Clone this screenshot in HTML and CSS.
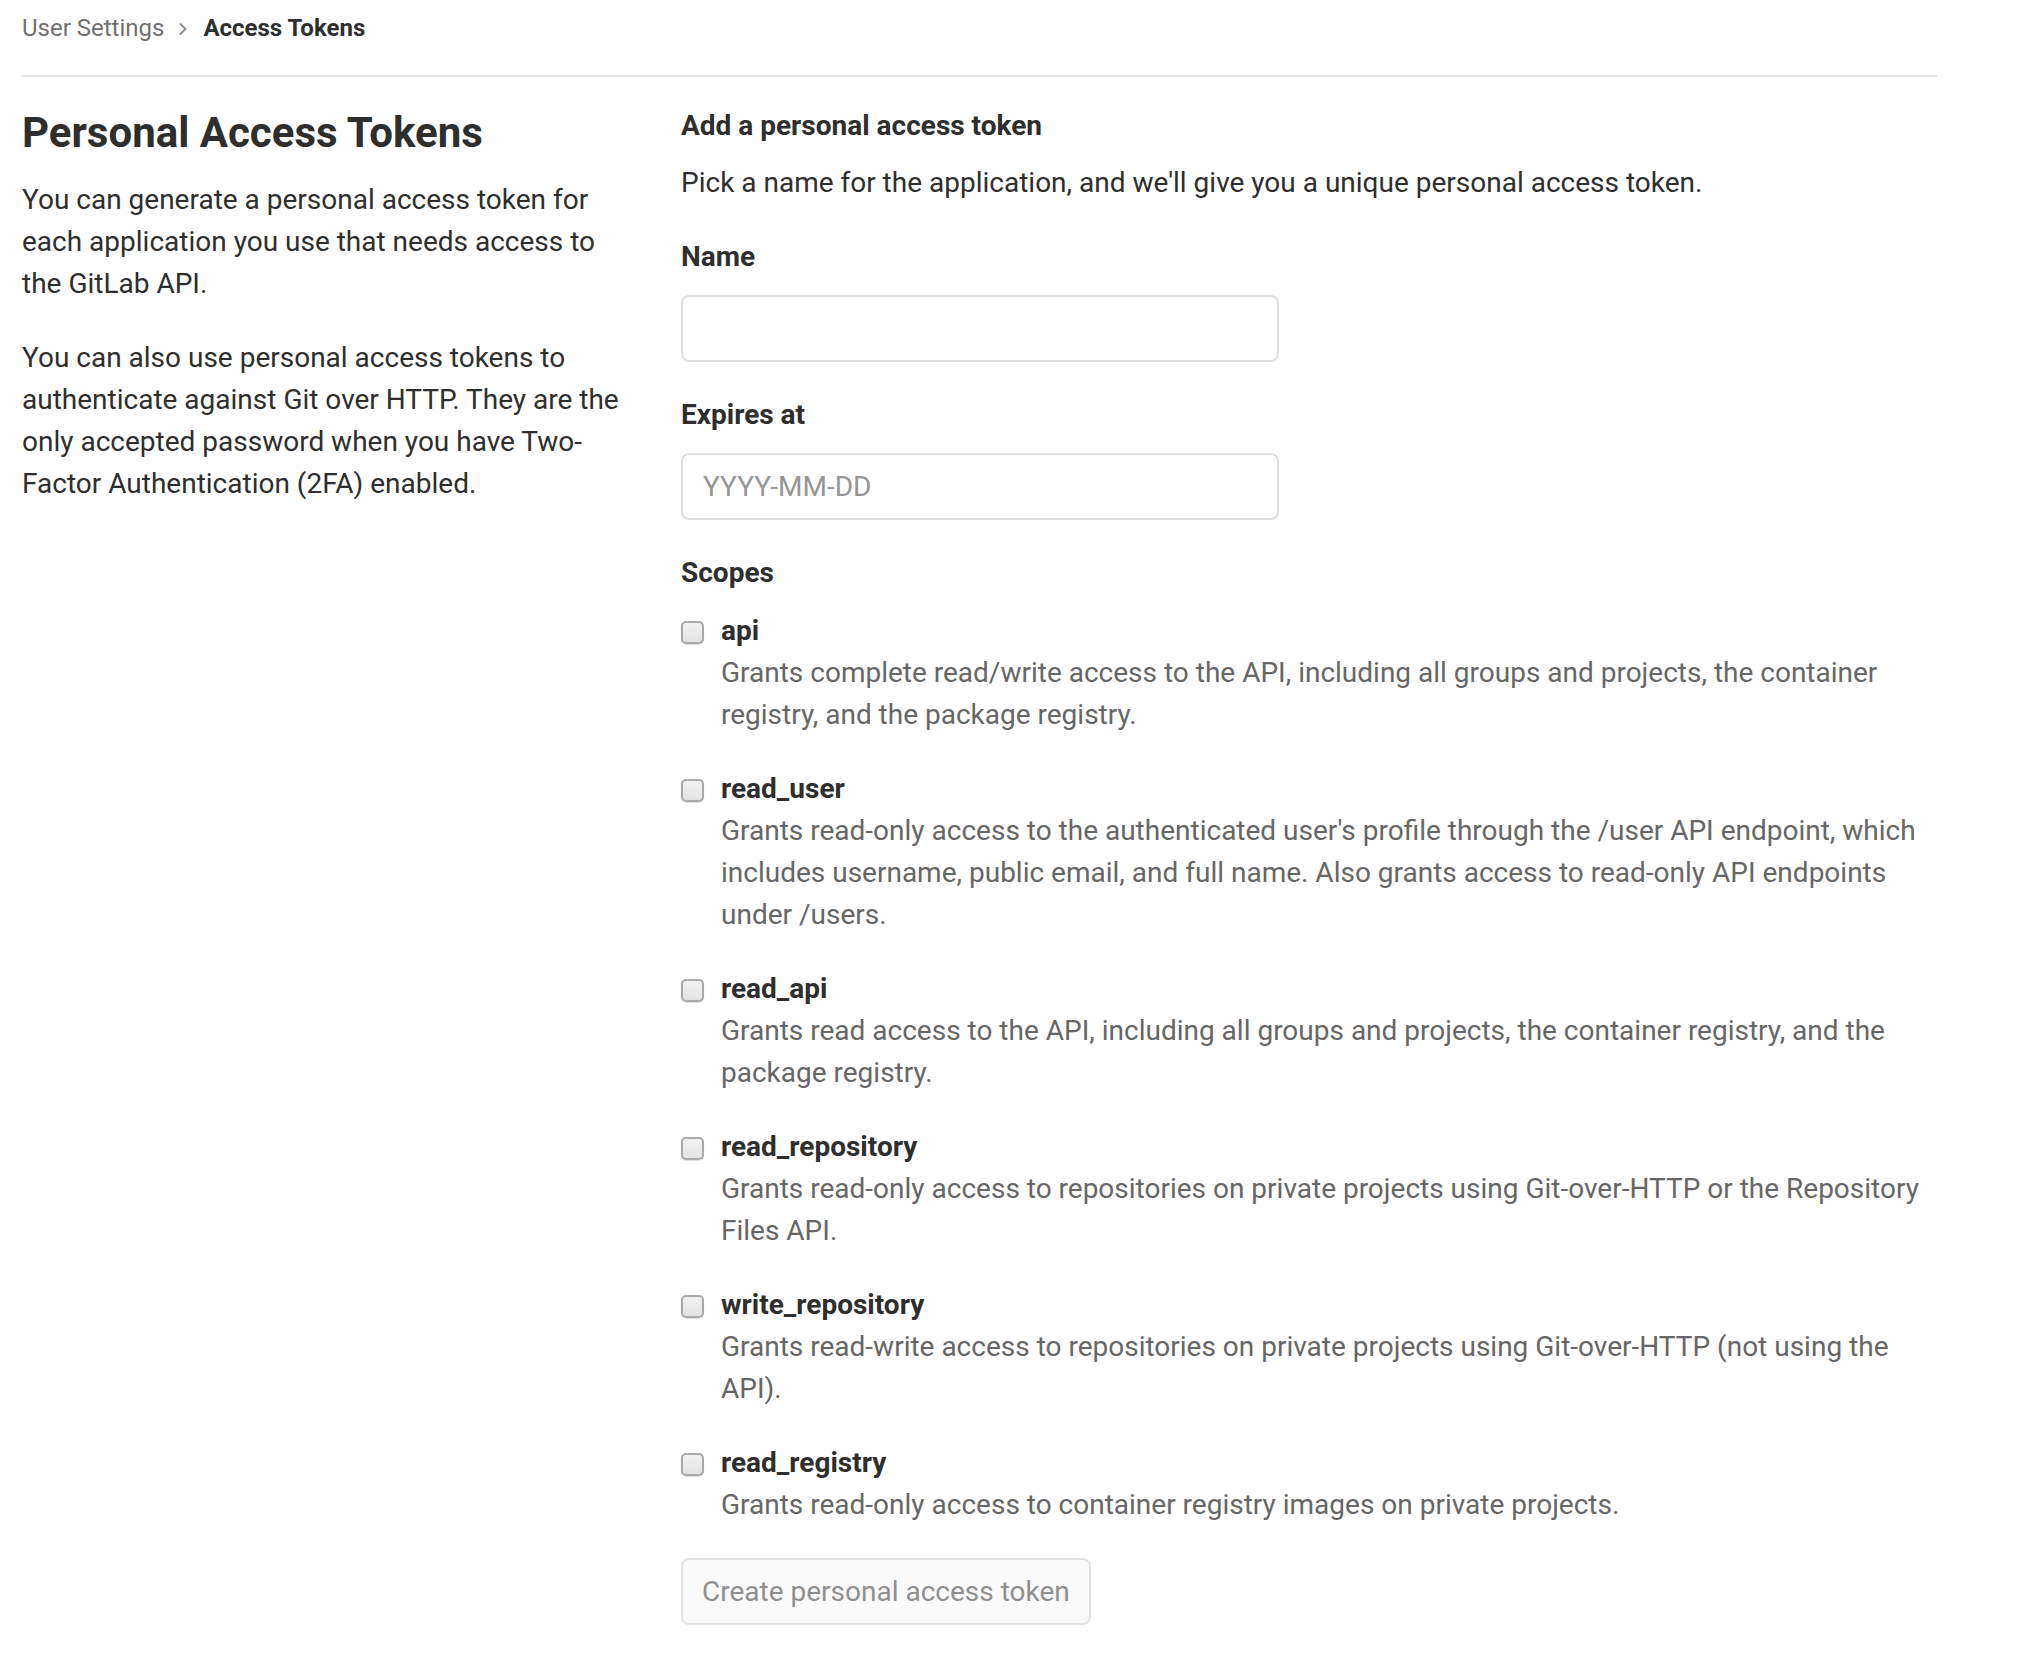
FILE: index.html
```html
<!DOCTYPE html>
<html lang="en">
<head>
<meta charset="utf-8">
<title>Access Tokens</title>
<link rel="stylesheet" href="styles.css">
</head>
<body>
<div class="page">
  <nav class="breadcrumb">
    <span class="crumb">User Settings</span>
    <svg class="chev" width="8" height="14" viewBox="0 0 8 14"><path d="M1.5 2 L6.5 7 L1.5 12" fill="none" stroke="#8c8c8c" stroke-width="1.8" stroke-linecap="round" stroke-linejoin="round"/></svg>
    <span class="crumb current">Access Tokens</span>
  </nav>
  <main class="row">
    <section class="sidebar">
      <h4 class="side-title">Personal Access Tokens</h4>
      <p class="side-text">You can generate a personal access token for each application you use that needs access to the GitLab API.</p>
      <p class="side-text">You can also use personal access tokens to authenticate against Git over HTTP. They are the only accepted password when you have Two-Factor Authentication (2FA) enabled.</p>
    </section>
    <section class="content">
      <h5 class="form-title">Add a personal access token</h5>
      <p class="form-intro">Pick a name for the application, and we'll give you a unique personal access token.</p>
      <div class="form-group">
        <label class="label" for="name">Name</label>
        <input class="input" id="name" type="text">
      </div>
      <div class="form-group">
        <label class="label" for="exp">Expires at</label>
        <input class="input" id="exp" type="text" placeholder="YYYY-MM-DD">
      </div>
      <div class="form-group scopes">
        <div class="label">Scopes</div>
        <div class="scope">
          <input class="check" type="checkbox" id="s1">
          <div class="scope-body"><label class="scope-name" for="s1">api</label>
            <p class="scope-desc">Grants complete read/write access to the API, including all groups and projects, the container registry, and the package registry.</p></div>
        </div>
        <div class="scope">
          <input class="check" type="checkbox" id="s2">
          <div class="scope-body"><label class="scope-name" for="s2">read_user</label>
            <p class="scope-desc">Grants read-only access to the authenticated user's profile through the /user API endpoint, which includes username, public email, and full name. Also grants access to read-only API endpoints under /users.</p></div>
        </div>
        <div class="scope">
          <input class="check" type="checkbox" id="s3">
          <div class="scope-body"><label class="scope-name" for="s3">read_api</label>
            <p class="scope-desc">Grants read access to the API, including all groups and projects, the container registry, and the package registry.</p></div>
        </div>
        <div class="scope">
          <input class="check" type="checkbox" id="s4">
          <div class="scope-body"><label class="scope-name" for="s4">read_repository</label>
            <p class="scope-desc">Grants read-only access to repositories on private projects using Git-over-HTTP or the Repository Files API.</p></div>
        </div>
        <div class="scope">
          <input class="check" type="checkbox" id="s5">
          <div class="scope-body"><label class="scope-name" for="s5">write_repository</label>
            <p class="scope-desc">Grants read-write access to repositories on private projects using Git-over-HTTP (not using the API).</p></div>
        </div>
        <div class="scope">
          <input class="check" type="checkbox" id="s6">
          <div class="scope-body"><label class="scope-name" for="s6">read_registry</label>
            <p class="scope-desc">Grants read-only access to container registry images on private projects.</p></div>
        </div>
      </div>
      <button class="btn" type="button" disabled>Create personal access token</button>
    </section>
  </main>
</div>
</body>
</html>
```

FILE: styles.css
```css
* { box-sizing: border-box; }
html, body { margin: 0; padding: 0; background: #fff; }
body {
  font-family: Roboto, "Liberation Sans", Arial, sans-serif;
  font-size: 28px;
  line-height: 42px;
  color: #2e2e2e;
}
.page {
  width: 1915px;
  margin-left: 22px;
}
.breadcrumb {
  display: flex;
  align-items: center;
  height: 77px;
  padding: 11px 0 30px;
  border-bottom: 2px solid #e5e5e5;
  font-size: 24px;
  line-height: 34px;
}
.crumb { color: #707070; }
.chev { margin: 2px 16px 0 15px; }
.crumb.current { color: #2e2e2e; font-weight: 700; }

.row {
  display: grid;
  grid-template-columns: 598px 1fr;
  column-gap: 61px;
  padding-top: 28px;
}
.side-title {
  margin: 3px 0 21px;
  font-size: 42px;
  line-height: 50px;
  font-weight: 700;
  color: #2e2e2e;
}
.side-text { margin: 0 0 32px; }

.form-title {
  margin: 0 0 15px;
  font-size: 28px;
  line-height: 42px;
  font-weight: 700;
}
.form-intro { margin: 0 0 32px; }
.form-group { margin-bottom: 32px; }
.label {
  display: block;
  font-weight: 700;
  margin-bottom: 17px;
}
.input {
  display: block;
  width: 598px;
  height: 67px;
  padding: 0 20px;
  border: 2px solid #dfdfdf;
  border-radius: 8px;
  font-family: inherit;
  font-size: 28px;
  color: #2e2e2e;
  background: #fff;
  outline: none;
}
.input::placeholder { color: #959595; }

.scopes .label { margin-bottom: 16px; }
.scope {
  display: grid;
  grid-template-columns: 40px 1fr;
  margin-bottom: 32px;
}
.scope:last-child { margin-bottom: 0; }
.check {
  appearance: none;
  -webkit-appearance: none;
  width: 23px;
  height: 23px;
  margin: 11px 0 0 0;
  border: 2px solid #a9a9a9;
  border-radius: 5px;
  background: linear-gradient(#f2f2f2, #e3e3e3);
  box-shadow: 0 1px 1px rgba(0,0,0,0.12);
}
.scope-name { display: block; font-weight: 700; }
.scope-desc { margin: 0; color: #666; }

.btn {
  display: block;
  width: 410px;
  height: 67px;
  padding: 0 19px;
  border: 2px solid #e2e2e2;
  border-radius: 8px;
  background: #fafafa;
  font-family: inherit;
  font-size: 28px;
  line-height: 42px;
  white-space: nowrap;
  color: #8f8f8f;
  text-align: left;
}
```
